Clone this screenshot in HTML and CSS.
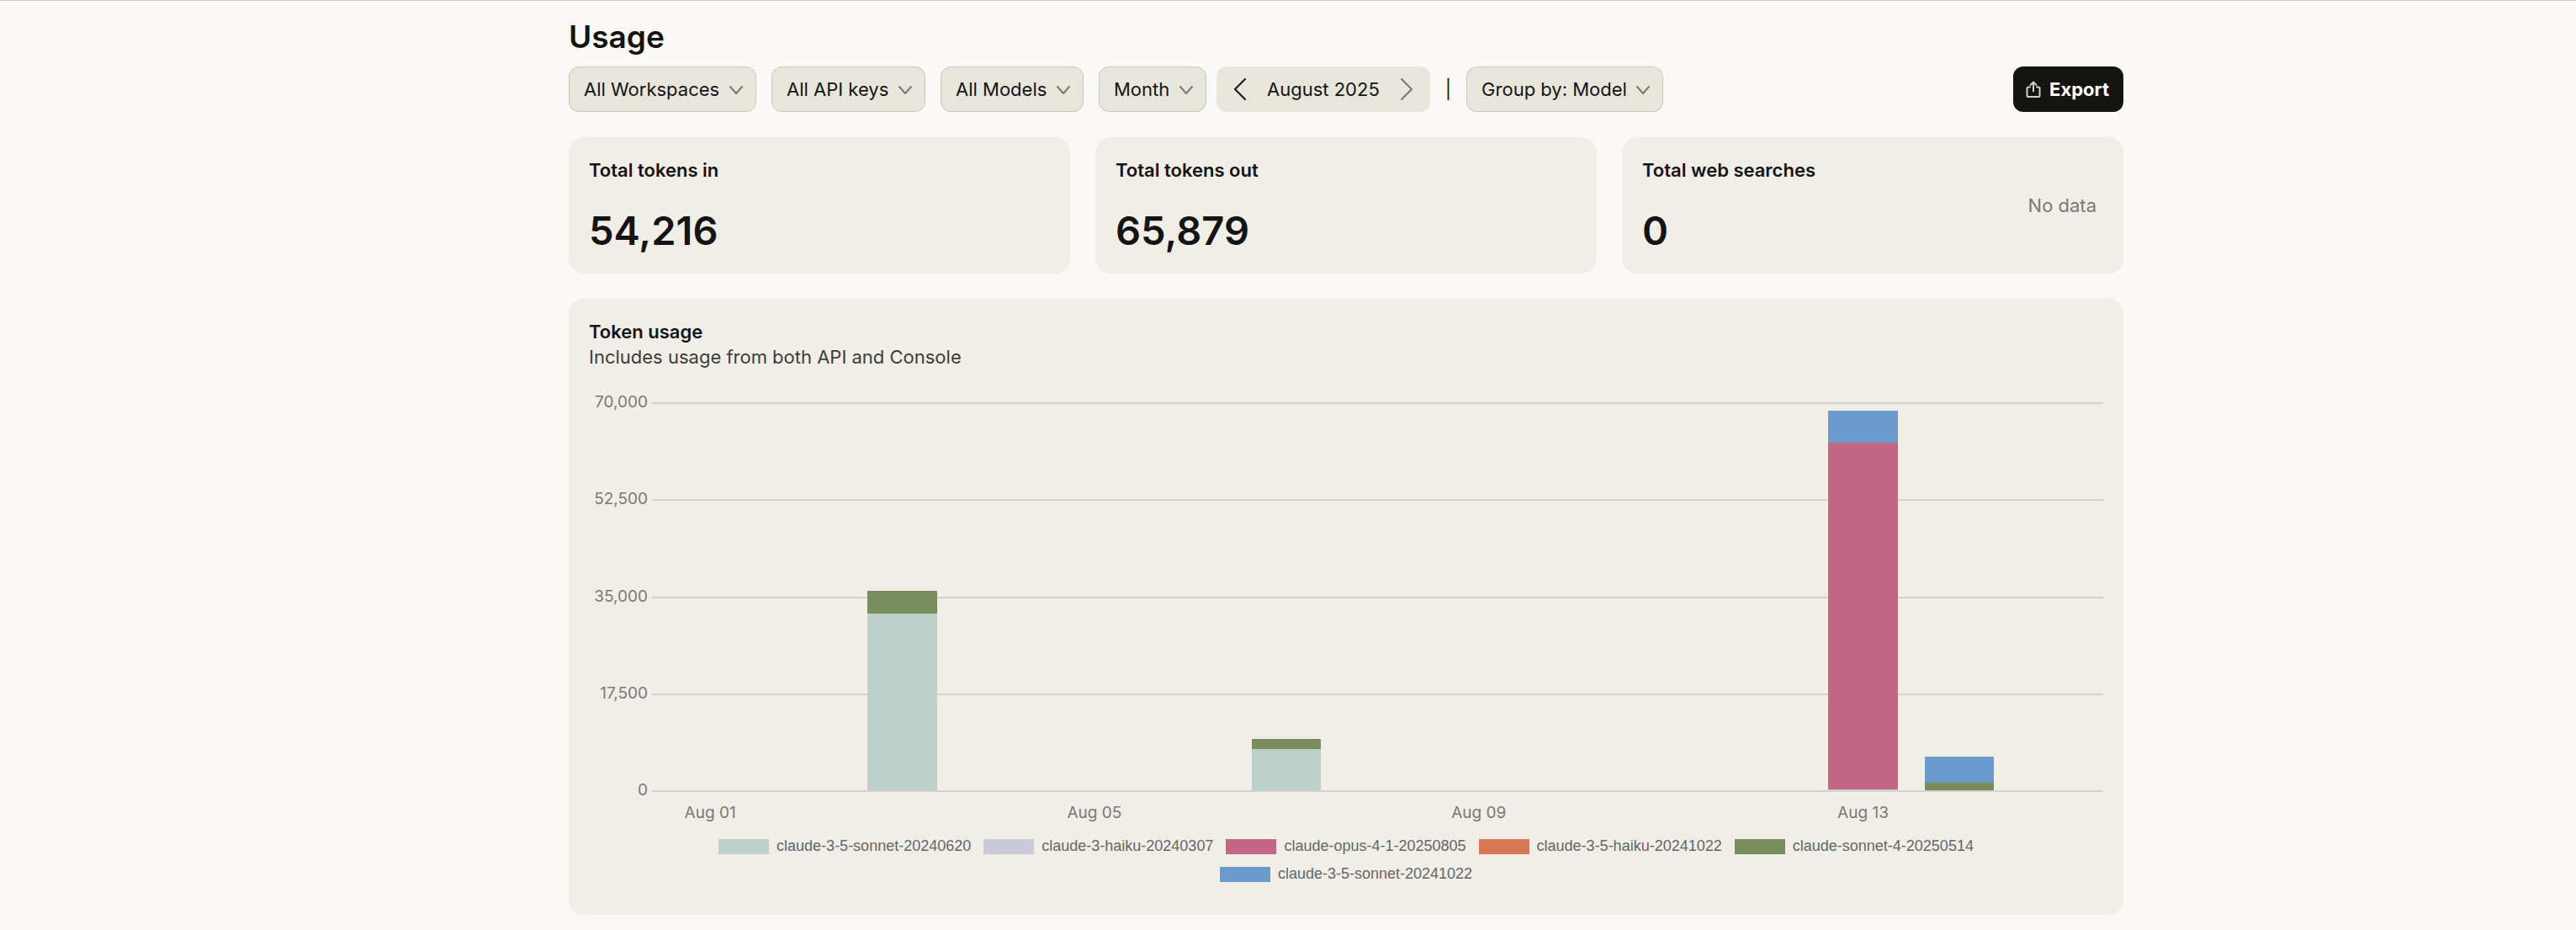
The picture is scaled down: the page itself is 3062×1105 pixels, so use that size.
FILE: index.html
```html
<!DOCTYPE html>
<html lang="en">
<head>
<meta charset="utf-8">
<meta name="viewport" content="width=device-width, initial-scale=1">
<title>Usage</title>
<link rel="stylesheet" href="styles.css">
</head>
<body>
<main class="page">
  <h1 class="page-title">Usage</h1>

  <div class="toolbar">
    <div class="filter">
      <select class="filter-select" aria-label="Workspace"><option>All Workspaces</option></select>
      <svg class="filter-chevron" viewBox="0 0 16 10" aria-hidden="true"><path d="M1 1l7 8 7-8"/></svg>
    </div>
    <div class="filter">
      <select class="filter-select" aria-label="API key"><option>All API keys</option></select>
      <svg class="filter-chevron" viewBox="0 0 16 10" aria-hidden="true"><path d="M1 1l7 8 7-8"/></svg>
    </div>
    <div class="filter">
      <select class="filter-select" aria-label="Model"><option>All Models</option></select>
      <svg class="filter-chevron" viewBox="0 0 16 10" aria-hidden="true"><path d="M1 1l7 8 7-8"/></svg>
    </div>
    <div class="period">
      <div class="filter">
        <select class="filter-select" aria-label="Period"><option>Month</option></select>
        <svg class="filter-chevron" viewBox="0 0 16 10" aria-hidden="true"><path d="M1 1l7 8 7-8"/></svg>
      </div>
      <div class="stepper">
        <button class="step" type="button" aria-label="Previous month">
          <svg class="step-icon" viewBox="0 0 16 26" aria-hidden="true"><path d="M14 1L2 13l12 12"/></svg>
        </button>
        <span>August 2025</span>
        <button class="step step-next" type="button" aria-label="Next month">
          <svg class="step-icon" viewBox="0 0 16 26" aria-hidden="true"><path d="M2 1l12 12L2 25"/></svg>
        </button>
      </div>
    </div>
    <span class="divider">|</span>
    <div class="filter">
      <select class="filter-select" aria-label="Group by"><option>Group by: Model</option></select>
      <svg class="filter-chevron" viewBox="0 0 16 10" aria-hidden="true"><path d="M1 1l7 8 7-8"/></svg>
    </div>
    <button class="export" type="button">
      <svg class="export-icon" viewBox="0 0 18 20" aria-hidden="true"><path d="M5 7.5H3A1.5 1.5 0 0 0 1.5 9v8.5A1.5 1.5 0 0 0 3 19h12a1.5 1.5 0 0 0 1.5-1.5V9A1.5 1.5 0 0 0 15 7.5h-2M9 12.5V1.5M5.5 5L9 1.5 12.5 5"/></svg>
      Export
    </button>
  </div>

  <section class="stats" aria-label="Totals">
    <article class="card stat">
      <div class="stat-body">
        <h2 class="card-title">Total tokens in</h2>
        <p class="stat-value">54,216</p>
      </div>
    </article>
    <article class="card stat">
      <div class="stat-body">
        <h2 class="card-title">Total tokens out</h2>
        <p class="stat-value">65,879</p>
      </div>
    </article>
    <article class="card stat">
      <div class="stat-body">
        <h2 class="card-title">Total web searches</h2>
        <p class="stat-value">0</p>
      </div>
      <p class="stat-empty">No data</p>
    </article>
  </section>

  <section class="card usage">
    <h2 class="card-title">Token usage</h2>
    <p class="card-note">Includes usage from both API and Console</p>

    <div class="chart">
      <ul class="y-axis">
        <li>70,000</li>
        <li>52,500</li>
        <li>35,000</li>
        <li>17,500</li>
        <li>0</li>
      </ul>
      <div class="gridlines">
        <i></i><i></i><i></i><i></i><i></i>
      </div>
      <div class="bars">
        <div class="bar day-3">
          <div class="sonnet-4" style="height:5.8%"></div>
          <div class="sonnet-june" style="height:45.6%"></div>
        </div>
        <div class="bar day-7">
          <div class="sonnet-4" style="height:2.5%"></div>
          <div class="sonnet-june" style="height:10.7%"></div>
        </div>
        <div class="bar day-13">
          <div class="sonnet-oct" style="height:8.3%"></div>
          <div class="opus" style="height:89.4%"></div>
          <div class="haiku-3" style="height:0.2%"></div>
        </div>
        <div class="bar day-14">
          <div class="sonnet-oct" style="height:6.7%"></div>
          <div class="sonnet-4" style="height:2%"></div>
        </div>
      </div>
      <ul class="x-axis">
        <li class="day-1">Aug 01</li>
        <li class="day-5">Aug 05</li>
        <li class="day-9">Aug 09</li>
        <li class="day-13">Aug 13</li>
      </ul>
    </div>

    <ul class="legend">
      <li><i class="swatch sonnet-june"></i>claude-3-5-sonnet-20240620</li>
      <li><i class="swatch haiku-3"></i>claude-3-haiku-20240307</li>
      <li><i class="swatch opus"></i>claude-opus-4-1-20250805</li>
      <li><i class="swatch haiku-35"></i>claude-3-5-haiku-20241022</li>
      <li><i class="swatch sonnet-4"></i>claude-sonnet-4-20250514</li>
      <li><i class="swatch sonnet-oct"></i>claude-3-5-sonnet-20241022</li>
    </ul>
  </section>
</main>
</body>
</html>
```
FILE: styles.css
```css
* {
  box-sizing: border-box;
}

body {
  margin: 0;
  padding: 19px 0 18px 138px;
  border-top: 1px solid #cbcbc8;
  background: #faf9f5;
  color: #141413;
  font: 22px/30px Inter, "Liberation Sans", sans-serif;
}

h1, h2, p, ul {
  margin: 0;
  padding: 0;
}

ul {
  list-style: none;
}

svg {
  display: block;
  fill: none;
  stroke: currentColor;
  stroke-linecap: round;
  stroke-linejoin: round;
}

button, select {
  margin: 0;
  color: inherit;
  font: inherit;
}

.page {
  max-width: 1848px;
  margin: 0 auto;
}

.page-title {
  margin-bottom: 11px;
  font-size: 37px;
  font-weight: 600;
  line-height: 48px;
}

/* Toolbar */

.toolbar {
  display: flex;
  flex-wrap: wrap;
  align-items: center;
  gap: 18px;
  margin-bottom: 30px;
}

.filter {
  display: grid;
  align-items: center;
}

.filter-select {
  grid-area: 1 / 1;
  height: 54px;
  padding: 0 42px 0 17px;
  border: 1px solid #c9c7bd;
  border-radius: 12px;
  background: #e8e6dc;
  appearance: none;
}

.filter-chevron {
  grid-area: 1 / 1;
  justify-self: end;
  width: 16px;
  height: 10px;
  margin: 2px 16px 0 0;
  color: #7b7a72;
  stroke-width: 2;
  pointer-events: none;
}

.period {
  display: flex;
  gap: 12px;
}

.stepper {
  display: flex;
  align-items: center;
  gap: 24px;
  height: 54px;
  padding: 0 20px;
  border-radius: 12px;
  background: #e8e6dc;
}

.step {
  padding: 0;
  border: 0;
  background: none;
}

.step-next {
  color: #7b7a72;
}

.step-icon {
  width: 16px;
  height: 26px;
  stroke-width: 2;
}

.export {
  display: flex;
  align-items: center;
  gap: 10px;
  height: 54px;
  margin-left: auto;
  padding: 0 17px 0 15px;
  border: 0;
  border-radius: 12px;
  background: #141413;
  color: #fff;
  font-weight: 700;
}

.export-icon {
  width: 18px;
  height: 20px;
  color: #d0d0ce;
  stroke-width: 2;
}

/* Cards */

.card {
  padding: 24px;
  border-radius: 18px;
  background: #f0eee6;
}

.card-title {
  font-size: 22px;
  font-weight: 600;
  line-height: 30px;
}

.card-note {
  color: #3d3d3a;
}

.stats {
  display: grid;
  grid-template-columns: repeat(3, 1fr);
  gap: 30px;
  margin-bottom: 30px;
}

.stat {
  display: flex;
  align-items: center;
  justify-content: space-between;
}

.stat-value {
  margin-top: 30px;
  font-size: 47px;
  font-weight: 600;
  line-height: 54px;
}

.stat-empty {
  padding-right: 8px;
  color: #7b7974;
}

/* Chart */

.usage {
  padding-bottom: 32px;
}

.chart {
  display: grid;
  grid-template-columns: 70px 1fr;
  grid-template-rows: 463px auto;
  column-gap: 5px;
  margin-top: 39px;
  color: #7b7974;
  font-size: 19px;
  line-height: 24px;
}

.y-axis, .gridlines {
  display: flex;
  flex-direction: column;
  justify-content: space-between;
}

.y-axis li {
  height: 2px;
  line-height: 0;
  text-align: right;
}

.gridlines {
  grid-area: 1 / 2;
}

.gridlines i {
  height: 2px;
  background: #d3d1ca;
}

.bars, .x-axis {
  display: grid;
  grid-template-columns: repeat(15, 1fr);
  margin-left: 12px;
}

.bars {
  grid-area: 1 / 2;
  padding-bottom: 2px;
}

.bar {
  display: flex;
  flex-direction: column;
  justify-content: flex-end;
  grid-row: 1;
  justify-self: center;
  width: 72%;
  height: 100%;
}

.x-axis {
  grid-column: 2;
  margin-top: 13px;
  text-align: center;
  white-space: nowrap;
}

.day-1 { grid-column: 1; }
.day-3 { grid-column: 3; }
.day-5 { grid-column: 5; }
.day-7 { grid-column: 7; }
.day-9 { grid-column: 9; }
.day-13 { grid-column: 13; }
.day-14 { grid-column: 14; }

.sonnet-june { background: #bcd1ca; }
.haiku-3 { background: #cbcadb; }
.opus { background: #c46686; }
.haiku-35 { background: #d97757; }
.sonnet-4 { background: #788c5d; }
.sonnet-oct { background: #6a9bcc; }

.legend {
  display: flex;
  flex-wrap: wrap;
  justify-content: center;
  column-gap: 15px;
  margin-top: 11px;
  color: #666;
  font: 18px/33px "Liberation Sans", Arial, sans-serif;
}

.legend li {
  display: flex;
  align-items: center;
  gap: 9px;
}

.swatch {
  width: 60px;
  height: 18px;
}
```
